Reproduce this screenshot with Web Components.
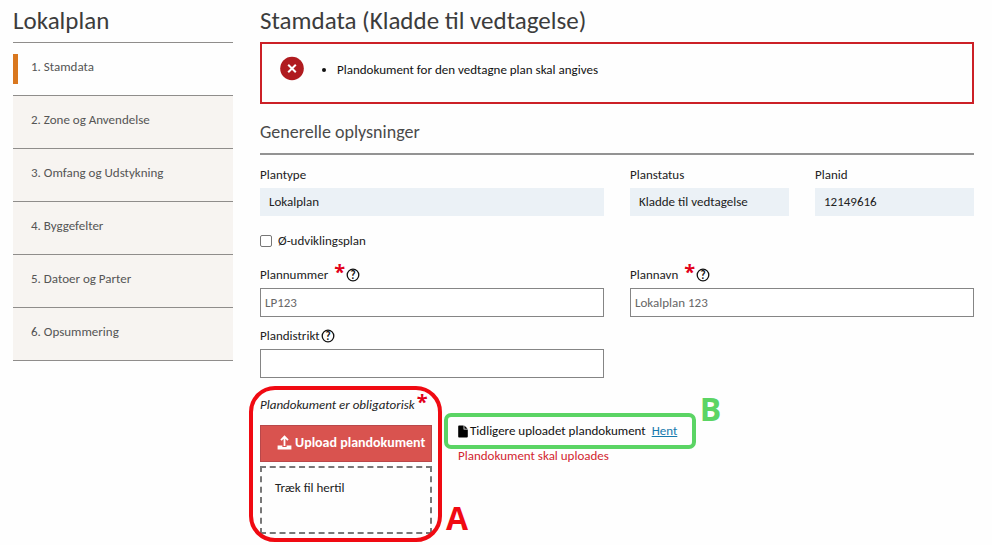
<!DOCTYPE html>
<html lang="da">
<head>
<meta charset="utf-8">
<meta name="viewport" content="width=device-width, initial-scale=1">
<title>Lokalplan - Stamdata</title>
<style>
  body {
    margin: 0;
    background: #fefefe;
    color: #222;
    font: 13px/16px Calibri, Carlito, Lato, sans-serif;
  }
</style>
</head>
<body>
<plan-page>
  <step-menu slot="menu" heading="Lokalplan">
    <step-item active>1. Stamdata</step-item>
    <step-item>2. Zone og Anvendelse</step-item>
    <step-item>3. Omfang og Udstykning</step-item>
    <step-item>4. Byggefelter</step-item>
    <step-item>5. Datoer og Parter</step-item>
    <step-item>6. Opsummering</step-item>
  </step-menu>
  <plan-form></plan-form>
</plan-page>

<script>
class PlanPage extends HTMLElement {
  constructor() {
    super()
    this.attachShadow({ mode: "open" }).innerHTML = `
      <style>
        :host {
          display: grid;
          grid-template-columns: 220px minmax(0, 1fr);
          gap: 27px;
          padding: 0 18px 11px 13px;
        }
      </style>
      <slot name="menu"></slot>
      <main><slot></slot></main>
    `
  }
}

class StepMenu extends HTMLElement {
  connectedCallback() {
    this.attachShadow({ mode: "open" }).innerHTML = `
      <style>
        :host { display: block; }
        h2 {
          margin: 0;
          height: 42px;
          color: #3c3c3c;
          font-size: 25px;
          font-weight: 400;
          line-height: 42px;
        }
        nav { border-bottom: 1px solid #8f8d8b; }
      </style>
      <h2>${this.getAttribute("heading")}</h2>
      <nav><slot></slot></nav>
    `
  }
}

class StepItem extends HTMLElement {
  constructor() {
    super()
    this.attachShadow({ mode: "open" }).innerHTML = `
      <style>
        :host {
          display: block;
          padding: 11px 0;
          border-top: 1px solid #8f8d8b;
          background: #f7f4f1;
        }
        :host([active]) { background: none; }
        a {
          display: block;
          padding: 5px 0 9px 13px;
          border-left: 5px solid transparent;
          color: #555;
          text-decoration: none;
        }
        :host([active]) a { border-color: #d9771e; }
      </style>
      <a href="#"><slot></slot></a>
    `
  }
}

class ErrorBox extends HTMLElement {
  constructor() {
    super()
    this.attachShadow({ mode: "open" }).innerHTML = `
      <style>
        :host {
          display: flex;
          gap: 33px;
          padding: 12px 18px 20px;
          border: 2px solid #cc2027;
          color: #111;
        }
        svg { flex: none; }
        ul { margin: 0; padding: 6px 0 0; list-style-position: outside; }
      </style>
      <svg width="24" height="26" viewBox="0 0 24 26" aria-hidden="true">
        <circle cx="12" cy="12.5" r="11.8" fill="#b01b1f"/>
        <path d="M8.2 8.7l7.6 7.6M15.8 8.7l-7.6 7.6" stroke="#fff" stroke-width="2"/>
      </svg>
      <ul><li><slot></slot></li></ul>
    `
  }
}

class RequiredMark extends HTMLElement {
  constructor() {
    super()
    this.attachShadow({ mode: "open" }).innerHTML = `
      <style>
        :host {
          display: inline-block;
          padding-bottom: 6px;
          color: #e2001a;
          font-family: "Open Sans", sans-serif;
          font-size: 20px;
          font-weight: 700;
          font-style: normal;
          line-height: 16px;
        }
      </style>
      <span>*</span>
    `
  }
}

class HelpButton extends HTMLElement {
  constructor() {
    super()
    this.attachShadow({ mode: "open" }).innerHTML = `
      <style>
        :host { display: block; }
        button {
          display: block;
          padding: 0;
          border: 0;
          background: none;
          color: #111;
          font: inherit;
        }
        svg { display: block; }
        text { font: 700 11px Calibri, Carlito, Lato, sans-serif; }
      </style>
      <button type="button" aria-label="Hjælp">
        <svg width="14" height="14" viewBox="0 0 14 14">
          <circle cx="7" cy="7" r="5.8" fill="none" stroke="currentColor" stroke-width="1.3"/>
          <text x="7" y="10.6" text-anchor="middle" fill="currentColor">?</text>
        </svg>
      </button>
    `
  }
}

class TextField extends HTMLElement {
  connectedCallback() {
    const required = this.hasAttribute("required")
    const readonly = this.hasAttribute("readonly")
    this.attachShadow({ mode: "open" }).innerHTML = `
      <style>
        :host { display: block; min-width: 0; }
        .label {
          display: flex;
          align-items: center;
          height: 16px;
          margin-bottom: 5px;
        }
        required-mark { margin-left: 6px; }
        help-button { margin-left: 1px; }
        input {
          display: block;
          box-sizing: border-box;
          width: 100%;
          height: 29px;
          padding: 0 4px;
          border: 1px solid #858585;
          border-radius: 0;
          background: #fff;
          color: #666;
          font: inherit;
        }
        input[readonly] {
          height: 28px;
          padding: 0 9px 2px;
          border: 0;
          background: #ebf1f6;
          color: #222;
        }
      </style>
      <div class="label">
        <label for="field">${this.getAttribute("label")}</label>
        ${required ? "<required-mark></required-mark>" : ""}
        ${readonly ? "" : "<help-button></help-button>"}
      </div>
      <input id="field" type="text" value="${this.getAttribute("value") || ""}" ${readonly ? "readonly" : ""}>
    `
  }
}

class CheckField extends HTMLElement {
  constructor() {
    super()
    this.attachShadow({ mode: "open" }).innerHTML = `
      <style>
        :host { display: block; }
        label { display: flex; align-items: center; gap: 6px; }
        input {
          appearance: none;
          box-sizing: border-box;
          width: 12px;
          height: 12px;
          margin: 0;
          border: 1px solid #767676;
          border-radius: 2px;
          background: #fff;
        }
        input:checked { background: #767676; }
      </style>
      <label><input type="checkbox"><slot></slot></label>
    `
  }
}

class UploadBox extends HTMLElement {
  constructor() {
    super()
    this.attachShadow({ mode: "open" }).innerHTML = `
      <style>
        :host { display: block; width: 172px; }
        .hint {
          display: flex;
          align-items: center;
          gap: 2px;
          height: 16px;
          font-style: italic;
          white-space: nowrap;
        }
        button {
          display: flex;
          align-items: center;
          gap: 3px;
          box-sizing: border-box;
          width: 100%;
          height: 37px;
          margin: 12px 0 4px;
          padding: 0 0 2px 16px;
          border: 1px solid #b9484a;
          background: #d9534f;
          color: #fff;
          font: inherit;
          font-size: 14px;
          font-weight: 700;
          white-space: nowrap;
        }
        .drop {
          box-sizing: border-box;
          height: 68px;
          padding: 12px 13px;
          border: 2px dashed #777;
        }
      </style>
      <div class="hint"><span>Plandokument er obligatorisk</span><required-mark></required-mark></div>
      <button type="button">
        <svg width="15" height="15" viewBox="0 0 15 15" fill="none" stroke="#fff" aria-hidden="true">
          <path d="M7.5 11V2M4 5.2L7.5 1.6 11 5.2" stroke-width="1.8"/>
          <path d="M0.6 10.4H5.4V12H9.6V10.4H14.4V14.4H0.6z" fill="#fff" stroke="none"/>
        </svg>
        Upload plandokument
      </button>
      <div class="drop">Træk fil hertil</div>
    `
  }
}

class UploadedFile extends HTMLElement {
  constructor() {
    super()
    this.attachShadow({ mode: "open" }).innerHTML = `
      <style>
        :host { display: flex; align-items: center; gap: 2px; color: #111; }
        a { margin-left: 4px; color: #1779ae; }
      </style>
      <svg width="10" height="13" viewBox="0 0 10 13" aria-hidden="true">
        <path d="M1 0.5H5.6V4.4H9.8V11.6Q9.8 12.6 8.8 12.6H1Q0.2 12.6 0.2 11.6V1.5Q0.2 0.5 1 0.5z"/>
        <path d="M6.4 0.6L9.6 3.7H6.4z"/>
      </svg>
      <span><slot></slot></span>
      <a href="#">Hent</a>
    `
  }
}

// Coloured frame with a letter, laid over the content it points out
class MarkedArea extends HTMLElement {
  connectedCallback() {
    this.attachShadow({ mode: "open" }).innerHTML = `
      <style>
        :host { display: block; position: relative; }
        .frame, b { position: absolute; pointer-events: none; }
        .frame { border: 4px solid; }
        b { font: 700 32px/32px "Open Sans", sans-serif; }
        :host([mark="A"]) .frame {
          inset: -11px -10px -8px -11px;
          border-color: #f00a12;
          border-radius: 26px;
        }
        :host([mark="A"]) b { left: 186px; bottom: 0; color: #f00a12; }
        :host([mark="B"]) .frame {
          inset: -10px -19px -10px -14px;
          border-color: #5bd464;
          border-radius: 7px;
        }
        :host([mark="B"]) b { right: -44px; bottom: 14px; color: #5bd464; }
      </style>
      <slot></slot>
      <div class="frame"></div>
      <b>${this.getAttribute("mark")}</b>
    `
  }
}

class PlanForm extends HTMLElement {
  constructor() {
    super()
    this.attachShadow({ mode: "open" }).innerHTML = `
      <style>
        :host { display: block; }
        h1 {
          margin: 0;
          color: #3c3c3c;
          font-size: 25px;
          font-weight: 400;
          line-height: 42px;
        }
        h2 {
          margin: 17px 0 12px;
          padding-bottom: 10px;
          border-bottom: 2px solid #939393;
          color: #4a4a4a;
          font-size: 18px;
          font-weight: 400;
          line-height: 22px;
        }
        .fields {
          display: grid;
          grid-template-columns: repeat(4, minmax(0, 1fr));
          column-gap: 26px;
        }
        .wide { grid-column: span 2; }
        check-field { grid-column: 1 / -1; margin: 17px 0 18px; }
        .district { margin: 11px 0 19px; }
        .documents { display: flex; align-items: flex-start; gap: 26px; }
        .status { padding-top: 26px; }
        .missing { margin: 9px 0 0; color: #d22630; }
      </style>
      <h1>Stamdata (Kladde til vedtagelse)</h1>
      <error-box>Plandokument for den vedtagne plan skal angives</error-box>
      <h2>Generelle oplysninger</h2>
      <div class="fields">
        <text-field class="wide" label="Plantype" value="Lokalplan" readonly></text-field>
        <text-field label="Planstatus" value="Kladde til vedtagelse" readonly></text-field>
        <text-field label="Planid" value="12149616" readonly></text-field>
        <check-field>Ø-udviklingsplan</check-field>
        <text-field class="wide" label="Plannummer" value="LP123" required></text-field>
        <text-field class="wide" label="Plannavn" value="Lokalplan 123" required></text-field>
        <text-field class="wide district" label="Plandistrikt"></text-field>
      </div>
      <div class="documents">
        <marked-area mark="A"><upload-box></upload-box></marked-area>
        <div class="status">
          <marked-area mark="B"><uploaded-file>Tidligere uploadet plandokument</uploaded-file></marked-area>
          <p class="missing">Plandokument skal uploades</p>
        </div>
      </div>
    `
  }
}

customElements.define("plan-page", PlanPage)
customElements.define("step-menu", StepMenu)
customElements.define("step-item", StepItem)
customElements.define("error-box", ErrorBox)
customElements.define("required-mark", RequiredMark)
customElements.define("help-button", HelpButton)
customElements.define("text-field", TextField)
customElements.define("check-field", CheckField)
customElements.define("upload-box", UploadBox)
customElements.define("uploaded-file", UploadedFile)
customElements.define("marked-area", MarkedArea)
customElements.define("plan-form", PlanForm)
</script>
</body>
</html>
